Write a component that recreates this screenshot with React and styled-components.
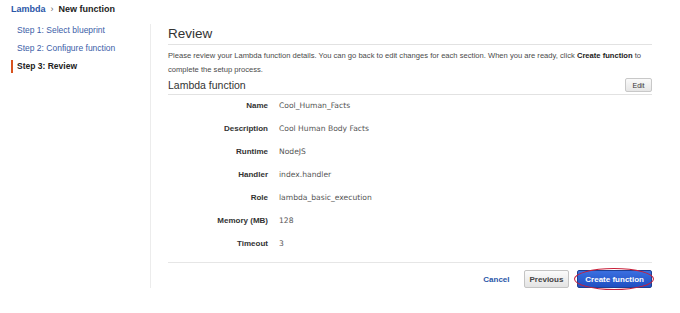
import React from 'react';
import styled, { createGlobalStyle } from 'styled-components';

const GlobalStyle = createGlobalStyle`
  html, body {
    margin: 0;
    padding: 0;
    background: #fff;
    font-family: "Liberation Sans", Arial, sans-serif;
    color: #333;
  }
`;

const Page = styled.div`
  width: 680px;
  height: 313px;
  overflow: hidden;
  padding: 4px 0 0 11px;
  box-sizing: border-box;
`;

const Breadcrumb = styled.div`
  display: flex;
  align-items: center;
  gap: 5px;
  height: 10px;
  font-size: 9px;
  font-weight: bold;
  color: #222;
`;

const Crumb = styled.span`
  color: ${p => (p.link ? '#2a56a8' : '#222')};
`;

const Chevron = styled.span`
  font-weight: normal;
  color: #666;
  font-size: 9px;
`;

const Body = styled.div`
  display: flex;
  margin-top: 10px;
`;

const Nav = styled.ul`
  list-style: none;
  margin: 0;
  padding: 0;
  width: 139px;
  display: flex;
  flex-direction: column;
  gap: 5px;
`;

const NavItem = styled.li`
  height: 13px;
  line-height: 13px;
  font-size: 8.5px;
  padding-left: 4px;
  border-left: 2px solid ${p => (p.active ? '#d9531e' : 'transparent')};
  color: ${p => (p.active ? '#222' : '#3b5ea8')};
  font-weight: ${p => (p.active ? 'bold' : 'normal')};
`;

const Main = styled.div`
  border-left: 1px solid #ececec;
  padding: 0 28px 0 17px;
  height: 264px;
  flex: 1;
  box-sizing: border-box;
  display: flex;
  flex-direction: column;
`;

const Title = styled.h1`
  margin: 0;
  padding: 2px 0 3px;
  font-size: 13.5px;
  font-weight: normal;
  color: #333;
  border-bottom: 1px solid #e2e2e2;
`;

const Intro = styled.p`
  margin: 4px 0 0;
  font-size: 7.6px;
  line-height: 14px;
  color: #4a4a4a;
  b { color: #222; }
`;

const SectionHead = styled.div`
  display: flex;
  justify-content: space-between;
  align-items: center;
  margin-top: 1px;
  padding-bottom: 2px;
  border-bottom: 1px solid #e2e2e2;
`;

const SectionTitle = styled.h2`
  margin: 0;
  font-size: 10.5px;
  font-weight: normal;
  color: #333;
`;

const SmallButton = styled.button`
  font-family: "Liberation Sans", Arial, sans-serif;
  font-size: 7px;
  color: #333;
  padding: 0;
  width: 27px;
  height: 14px;
  border: 1px solid #c8c8c8;
  border-radius: 2px;
  background: linear-gradient(#fafafa, #e6e6e6);
`;

const Fields = styled.dl`
  margin: 0;
  padding: 0 0 0 7px;
  display: grid;
  grid-template-columns: 93px 1fr;
  grid-auto-rows: 23px;
  column-gap: 11px;
  align-items: center;
`;

const Label = styled.dt`
  text-align: right;
  font-size: 8px;
  font-weight: bold;
  color: #333;
  margin-top: -2px;
`;

const Value = styled.dd`
  margin: -2px 0 0;
  font-family: "DejaVu Sans", Verdana, sans-serif;
  font-size: 7.6px;
  color: #555;
`;

const Footer = styled.div`
  margin-top: auto;
  border-top: 1px solid #e6e6e6;
  padding-top: 7px;
  display: flex;
  justify-content: flex-end;
  align-items: center;
  gap: 8px;
`;

const LinkButton = styled.span`
  font-size: 8px;
  font-weight: bold;
  color: #2a56a8;
  margin-right: 6px;
`;

const Button = styled.button`
  position: relative;
  font-family: "Liberation Sans", Arial, sans-serif;
  font-size: 8px;
  font-weight: bold;
  height: 18px;
  padding: 0 ${p => (p.primary ? '7px' : '5px')};
  border-radius: 2px;
  border: 1px solid ${p => (p.primary ? '#1d3f94' : '#c4c4c4')};
  color: ${p => (p.primary ? '#fff' : '#444')};
  background: ${p =>
    p.primary
      ? 'linear-gradient(#3a6fe0, #1f4fc2)'
      : 'linear-gradient(#fbfbfb, #e3e3e3)'};

  &::after {
    content: '';
    display: ${p => (p.circled ? 'block' : 'none')};
    position: absolute;
    left: -4px;
    right: -3px;
    top: -3px;
    bottom: -3px;
    border: 1.5px solid #c8203a;
    border-radius: 50%;
  }
`;

const fields = [
  ['Name', 'Cool_Human_Facts'],
  ['Description', 'Cool Human Body Facts'],
  ['Runtime', 'NodeJS'],
  ['Handler', 'index.handler'],
  ['Role', 'lambda_basic_execution'],
  ['Memory (MB)', '128'],
  ['Timeout', '3'],
];

export default function App() {
  return (
    <>
      <GlobalStyle />
      <Page>
        <Breadcrumb>
          <Crumb link>Lambda</Crumb>
          <Chevron>›</Chevron>
          <Crumb>New function</Crumb>
        </Breadcrumb>
        <Body>
          <Nav>
            <NavItem>Step 1: Select blueprint</NavItem>
            <NavItem>Step 2: Configure function</NavItem>
            <NavItem active>Step 3: Review</NavItem>
          </Nav>
          <Main>
            <Title>Review</Title>
            <Intro>
              Please review your Lambda function details. You can go back to edit changes for each section. When you are ready, click <b>Create function</b> to complete the setup process.
            </Intro>
            <SectionHead>
              <SectionTitle>Lambda function</SectionTitle>
              <SmallButton>Edit</SmallButton>
            </SectionHead>
            <Fields>
              {fields.map(([k, v]) => (
                <React.Fragment key={k}>
                  <Label>{k}</Label>
                  <Value>{v}</Value>
                </React.Fragment>
              ))}
            </Fields>
            <Footer>
              <LinkButton>Cancel</LinkButton>
              <Button>Previous</Button>
              <Button primary circled>Create function</Button>
            </Footer>
          </Main>
        </Body>
      </Page>
    </>
  );
}
